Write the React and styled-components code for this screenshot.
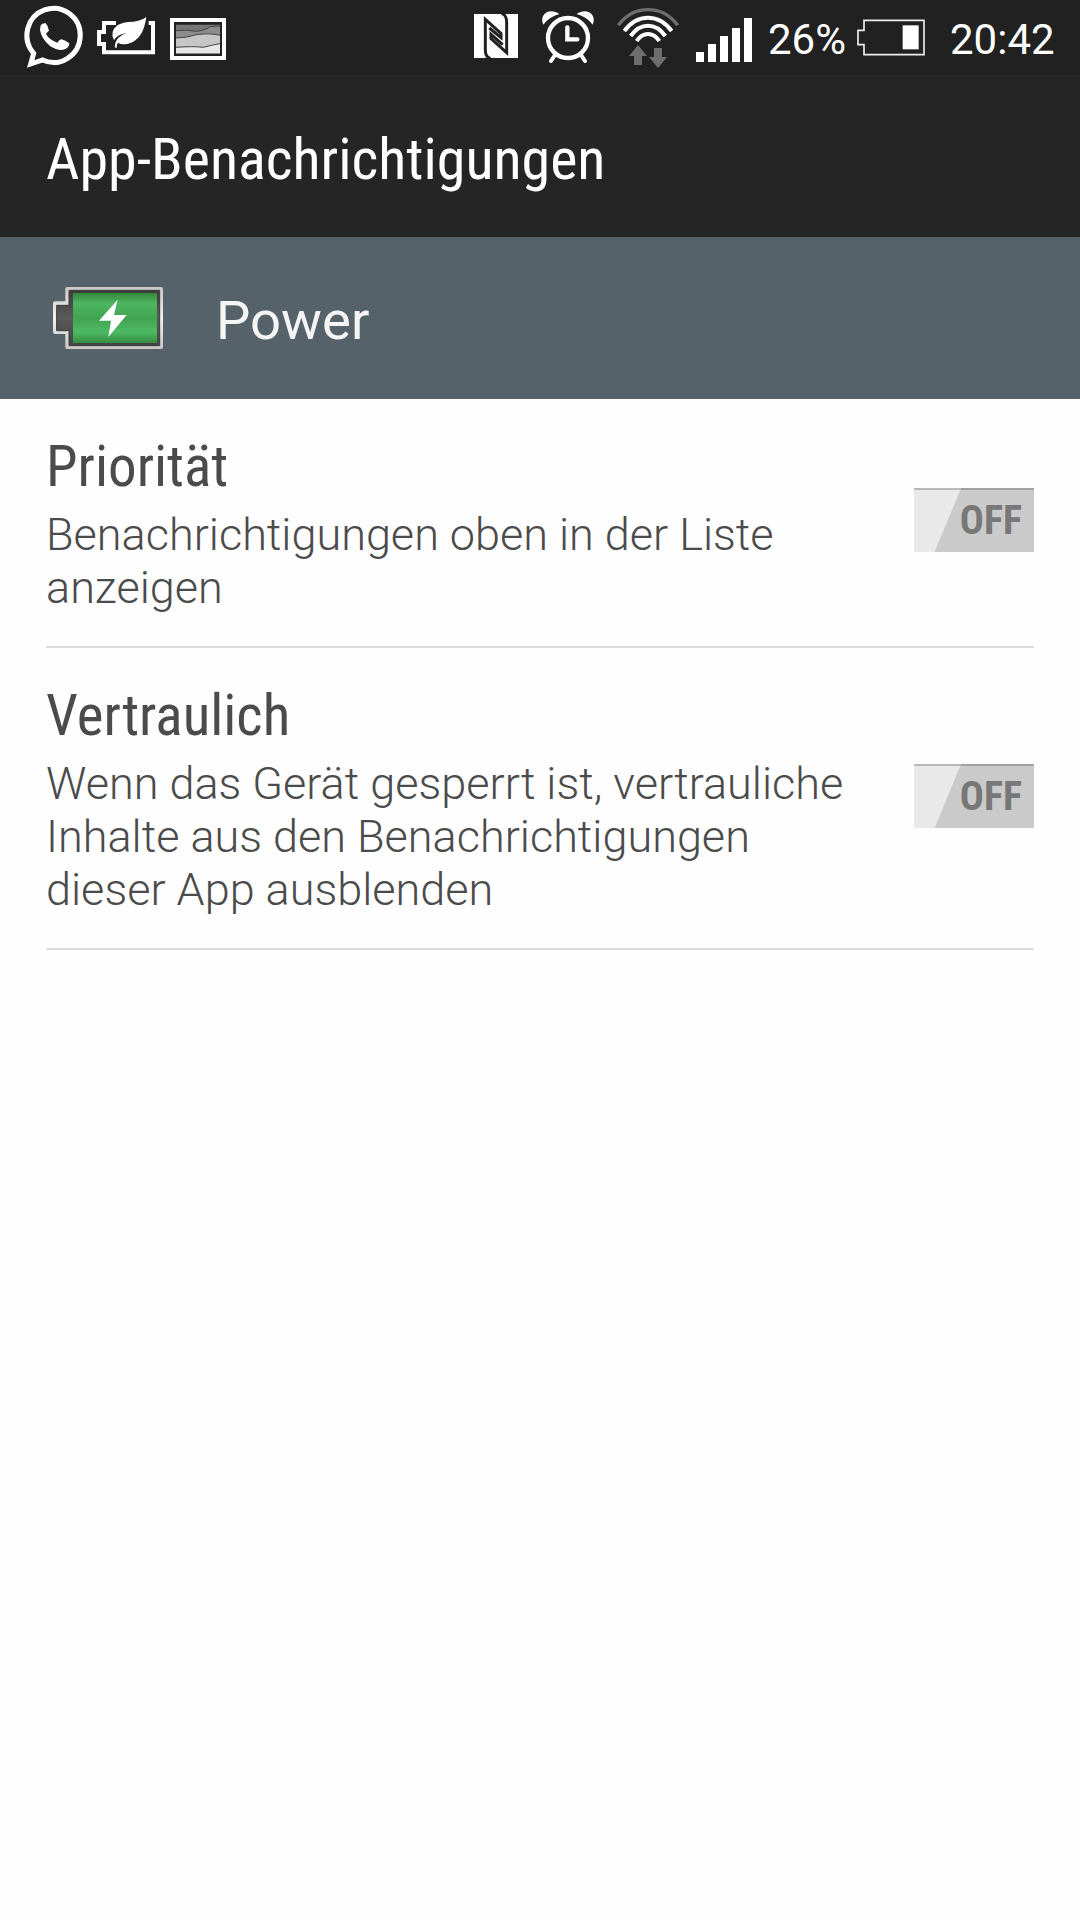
import styled, { createGlobalStyle } from "styled-components";

const GlobalStyle = createGlobalStyle`
    body {
        margin: 0;
        background: #fefefe;
        font-family: Roboto, "Liberation Sans", sans-serif;
    }
`;

const Screen = styled.div`
    width: 1080px;
    height: 1920px;
    background: #fefefe;
    overflow: hidden;
`;

const StatusBar = styled.div`
    display: flex;
    align-items: center;
    height: 75px;
    background: #212121;
    color: #ffffff;
`;

const Glyph = styled.svg`
    display: block;
    flex: none;
    margin-left: ${props => props.$gap || 0}px;
`;

const StatusText = styled.span`
    width: ${props => props.$width}px;
    margin-left: ${props => props.$gap}px;
    font-size: 42px;
    line-height: 50px;
    padding-top: 4px;
    white-space: nowrap;
`;

const Header = styled.header`
    display: flex;
    align-items: center;
    height: 162px;
    padding: 0 46px;
    box-sizing: border-box;
    background: #252525;
`;

const Title = styled.h1`
    margin: 0;
    padding-top: 6px;
    color: #ffffff;
    font-family: "Roboto Condensed", Roboto, sans-serif;
    font-stretch: 75%;
    font-size: 58px;
    font-weight: 400;
    line-height: 68px;
    white-space: nowrap;
`;

const AppBar = styled.div`
    display: flex;
    align-items: center;
    height: 162px;
    background: #556269;
`;

const AppName = styled.span`
    margin-left: 50px;
    padding-top: 3px;
    color: #f5f5f5;
    font-size: 54.5px;
    line-height: 64px;
`;

const Settings = styled.main`
    padding: 0 46px;
`;

const Row = styled.section`
    display: flex;
    align-items: center;
    justify-content: space-between;
    height: ${props => props.$height}px;
    box-sizing: border-box;
    border-bottom: 2px solid #dcdcdc;
    color: #4b4b4b;
`;

const RowText = styled.div`
    padding-top: 2px;
`;

const RowTitle = styled.h2`
    margin: 0 0 8px;
    font-family: "Roboto Condensed", Roboto, sans-serif;
    font-stretch: 75%;
    font-size: 57px;
    font-weight: 400;
    line-height: 67px;
`;

const Summary = styled.p`
    margin: 0;
    width: 820px;
    font-size: 45px;
    font-weight: 300;
    line-height: 53px;
`;

const Toggle = styled.button`
    display: flex;
    align-items: center;
    justify-content: flex-end;
    width: 120px;
    height: 64px;
    margin-bottom: 5px;
    padding: 1px 12px 0 0;
    border: 0;
    background:
        linear-gradient(90deg, #b8b8b8 47px, #a2a2a2 47px) top / 100% 2px no-repeat,
        linear-gradient(112.5deg, #e9e9e9 43px, #cacaca 44px);
    color: #777777;
    font-family: "Roboto Condensed", Roboto, sans-serif;
    font-stretch: 75%;
    font-size: 40px;
    font-weight: 700;
`;

const WhatsAppIcon = () => (
    <Glyph $gap={20} width="70" height="75" viewBox="60 0 210 225" fill="none">
        <path d="M92 192 L101 160 A80 81 0 1 1 128 180 Z" stroke="#fff" strokeWidth="15" />
        <path d="M122 76 Q128 68 137 70 Q145 78 147 92 Q140 98 138 102 Q148 120 172 128 Q180 118 185 118 Q196 121 208 130 Q208 142 194 148 Q176 154 150 138 Q124 116 120 90 Z" fill="#fff" />
    </Glyph>
);

const EcoBatteryIcon = () => (
    <Glyph $gap={5} width="63" height="75" viewBox="285 0 189 225">
        <path d="M348 69 H312 V96 H297 V132 H312 V157 H459 V69 H446" fill="none" stroke="#fff" strokeWidth="12" />
        <path d="M439 51 Q430 120 384 131 Q366 136 354 128 Q349 134 350 144 L344 142 Q344 130 350 120 Q360 106 380 99 Q352 103 342 121 Q328 96 352 76 Q366 66 400 65 Q424 62 439 51 Z" fill="#fff" />
    </Glyph>
);

const PictureIcon = () => (
    <Glyph $gap={10} width="60" height="75" viewBox="504 0 180 225">
        <path d="M516 60 H672 V174 H516 Z" fill="#212121" stroke="#fff" strokeWidth="12" />
        <path d="M528 74 H660 V160 H528 Z" fill="#777" />
        <path d="M528 92 Q560 88 590 94 Q620 90 630 80 L660 78 V160 H528 Z" fill="#8c8c8c" />
        <path d="M528 114 Q560 114 590 104 Q630 98 660 106 V160 H528 Z" fill="#c6c6c6" />
        <path d="M528 142 Q580 138 610 142 Q640 134 660 131 V160 H528 Z" fill="#e8e8e8" />
        <path d="M528 92 Q560 88 590 94 Q620 90 630 80 L660 78 M528 114 Q560 114 590 104 Q630 98 660 106 M528 142 Q580 138 610 142 Q640 134 660 131" fill="none" stroke="#444" strokeWidth="3" />
    </Glyph>
);

const NfcIcon = () => (
    <Glyph $gap={242} width="50" height="75" viewBox="30 0 150 225">
        <path d="M42 42 H174 V174 H42 Z" fill="#fff" />
        <path d="M92 176 Q76 172 76 150 V58 L123 100 V113 L88 84 M124 40 Q140 44 140 66 V158 L93 116 V103 L128 134" fill="none" stroke="#212121" strokeWidth="9" />
    </Glyph>
);

const AlarmIcon = () => (
    <Glyph $gap={18} width="60" height="75" viewBox="234 0 180 225" fill="none" stroke="#fff">
        <circle cx="324" cy="114" r="60" strokeWidth="13" />
        <path d="M322 82 V118 H352" strokeWidth="13" strokeLinecap="round" />
        <path d="M285 165 L273 183 M363 165 L375 183" strokeWidth="12" strokeLinecap="round" />
        <path d="M250 74 C236 44 268 20 298 42 Q268 50 250 74 Z M398 74 C412 44 380 20 350 42 Q380 50 398 74 Z" fill="#fff" stroke="none" />
    </Glyph>
);

const WifiIcon = () => (
    <Glyph $gap={15} width="70" height="75" viewBox="459 0 210 225" fill="none">
        <path d="M475 76 Q510 29 564 29 Q618 29 653 76" stroke="#6e6e6e" strokeWidth="10" />
        <path d="M493 93 Q522 53 564 53 Q606 53 635 93 M512 108 Q534 77 564 77 Q594 77 616 108 M530 123 Q544 102 564 102 Q584 102 598 123" stroke="#fff" strokeWidth="12" />
        <path d="M534 135 L561 168 H546 V195 H522 V168 H507 Z M582 144 H606 V171 H621 L594 204 L567 171 H582 Z" fill="#6e6e6e" />
    </Glyph>
);

const SignalIcon = () => (
    <Glyph $gap={12} width="60" height="75" viewBox="705 0 180 225" fill="#fff">
        <path d="M708 156 h24 v30 h-24 Z M744 132 h24 v54 h-24 Z M780 108 h24 v78 h-24 Z M816 84 h24 v102 h-24 Z M852 54 h24 v132 h-24 Z" />
    </Glyph>
);

const BatteryIcon = () => (
    <Glyph $gap={9} width="72" height="75" viewBox="315 0 216 225">
        <path d="M342 61 H522 V164 H342 V134 H324 V91 H342 Z" fill="none" stroke="#eee" strokeWidth="5" />
        <path d="M458 76 h48 v72 h-48 Z" fill="#fff" />
    </Glyph>
);

const PowerIcon = () => (
    <Glyph $gap={50} width="116" height="162" viewBox="60 -69 348 486">
        <defs>
            <linearGradient id="charge" x1="0" y1="0" x2="0" y2="1">
                <stop offset="0" stopColor="#32863c" />
                <stop offset="0.2" stopColor="#4db660" />
                <stop offset="0.5" stopColor="#41a350" />
                <stop offset="0.78" stopColor="#4db962" />
                <stop offset="1" stopColor="#368c42" />
            </linearGradient>
            <linearGradient id="shell" x1="0" y1="0" x2="0" y2="1">
                <stop offset="0" stopColor="#c9c7c7" />
                <stop offset="0.5" stopColor="#efefef" />
                <stop offset="1" stopColor="#c9c7c7" />
            </linearGradient>
            <linearGradient id="cell" x1="0" y1="0" x2="0" y2="1">
                <stop offset="0" stopColor="#3c3c3c" />
                <stop offset="0.5" stopColor="#5a5a5a" />
                <stop offset="1" stopColor="#444444" />
            </linearGradient>
        </defs>
        <path d="M111 81 H394 Q399 81 399 87 V261 Q399 267 394 267 H111 Q106 267 106 261 V222 H75 Q69 222 69 216 V130 Q69 124 75 124 H106 V87 Q106 81 111 81 Z" fill="url(#shell)" />
        <path d="M117 91 H389 V257 H117 V212 H80 V136 H117 Z" fill="url(#cell)" stroke="#3c3c3c" strokeWidth="3" />
        <path d="M129 99 H381 V249 H129 Z" fill="url(#charge)" />
        <path d="M263 119 L207 182 H243 L235 231 L290 165 H252 Z" fill="#fff" />
    </Glyph>
);

const settings = [
    {
        title: "Priorität",
        summary: "Benachrichtigungen oben in der Liste anzeigen",
        height: 249,
    },
    {
        title: "Vertraulich",
        summary: "Wenn das Gerät gesperrt ist, vertrauliche Inhalte aus den Benachrichtigungen dieser App ausblenden",
        height: 302,
    },
];

const App = () => {
    return (
        <Screen>
            <GlobalStyle />
            <StatusBar>
                <WhatsAppIcon />
                <EcoBatteryIcon />
                <PictureIcon />
                <NfcIcon />
                <AlarmIcon />
                <WifiIcon />
                <SignalIcon />
                <StatusText $gap={13} $width={78}>26%</StatusText>
                <BatteryIcon />
                <StatusText $gap={23} $width={110}>20:42</StatusText>
            </StatusBar>
            <Header>
                <Title>App-Benachrichtigungen</Title>
            </Header>
            <AppBar>
                <PowerIcon />
                <AppName>Power</AppName>
            </AppBar>
            <Settings>
                { settings.map(({title, summary, height}) =>
                    <Row key={title} $height={height}>
                        <RowText>
                            <RowTitle>{title}</RowTitle>
                            <Summary>{summary}</Summary>
                        </RowText>
                        <Toggle>OFF</Toggle>
                    </Row>
                ) }
            </Settings>
        </Screen>
    )
}

export default App;
